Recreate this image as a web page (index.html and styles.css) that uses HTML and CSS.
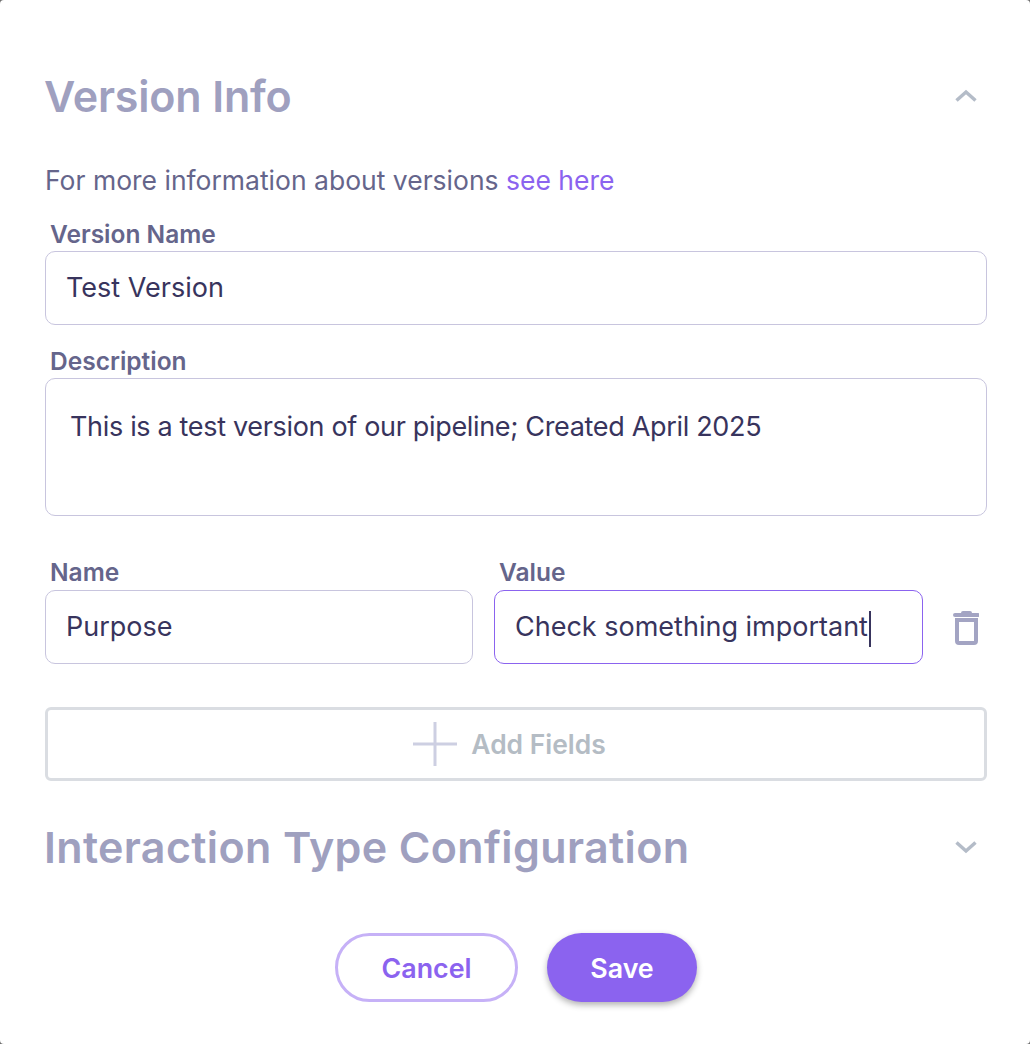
FILE: index.html
```html
<!DOCTYPE html>
<html lang="en">
<head>
    <meta charset="UTF-8">
    <title>Version Info</title>
    <link rel="stylesheet" href="styles.css">
</head>
<body>
    <div class="dialog">
        <div class="section-head">
            <h2 class="title-short">Version Info</h2>
            <svg class="chevron" width="24" height="14" viewBox="0 0 24 14"><path d="M2.500 11.500 12 3l9.500 8.500"/></svg>
        </div>
        <p class="hint">For more information about versions <a href="#">see here</a></p>

        <label class="field-label">Version Name</label>
        <div class="input">Test Version</div>

        <label class="field-label label-desc">Description</label>
        <div class="input textarea">This is a test version of our pipeline; Created April 2025</div>

        <div class="pair-row">
            <div class="pair-col">
                <label class="field-label">Name</label>
                <div class="input">Purpose</div>
            </div>
            <div class="pair-col pair-value">
                <label class="field-label">Value</label>
                <div class="input focused"><span>Check something important</span><i class="caret"></i></div>
            </div>
            <svg class="trash" width="26" height="34" viewBox="0 0 26 34">
                <path class="lid" d="M2 4h23M10 2h7"/>
                <path class="can" d="M4 9h19v21a2 2 0 0 1-2 2H6a2 2 0 0 1-2-2z"/>
            </svg>
        </div>

        <button class="add-fields">
            <svg width="44" height="44" viewBox="0 0 44 44"><path d="M0 22h44M22 0v44"/></svg>
            <span>Add Fields</span>
        </button>

        <div class="section-head second">
            <h2 class="title-long">Interaction Type Configuration</h2>
            <svg class="chevron" width="24" height="14" viewBox="0 0 24 14"><path d="M2.500 2.500 12 11l9.500-8.500"/></svg>
        </div>

        <div class="actions">
            <button class="btn btn-cancel">Cancel</button>
            <button class="btn btn-save">Save</button>
        </div>
    </div>
</body>
</html>
```

FILE: styles.css
```css
* {
    box-sizing: border-box;
}

html, body {
    margin: 0;
    padding: 0;
    height: 100%;
    background: #6e6e6e;
}

body {
    font-family: 'Inter', 'Noto Sans', sans-serif;
    overflow: hidden;
}

.dialog {
    width: 1030px;
    height: 1044px;
    padding: 68px 43px 0 45px;
    background: #fff;
    border-radius: 4px;
}

.section-head {
    display: flex;
    justify-content: space-between;
    align-items: center;
    height: 56px;
    padding-right: 9px;
}

.section-head h2 {
    margin: 0 0 0 -1px;
    font-size: 43px;
    font-weight: 600;
    color: #9fa0bf;
}

.title-short {
    letter-spacing: -0.17px;
}

.title-long {
    letter-spacing: 0.36px;
}

.chevron path {
    fill: none;
    stroke: #b4bcc8;
    stroke-width: 3.500;
}

.hint {
    margin: 40px 0 0;
    height: 32px;
    line-height: 32px;
    font-size: 26.500px;
    color: #65658b;
}

.hint a {
    color: #8b63ef;
    text-decoration: none;
}

.field-label {
    display: block;
    height: 30px;
    line-height: 30px;
    margin: 23px 0 2px 5px;
    font-size: 24.500px;
    font-weight: 600;
    color: #65658b;
}

.label-desc {
    margin-top: 21px;
}

.input {
    height: 74px;
    padding: 0 20px;
    line-height: 72px;
    font-size: 27px;
    color: #38345d;
    background: #fff;
    border: 1px solid #c8c5de;
    border-radius: 10px;
    white-space: nowrap;
}

.textarea {
    height: 138px;
    padding: 28px 24px 0;
    line-height: 40px;
    letter-spacing: -0.33px;
}

.pair-row {
    display: flex;
    align-items: flex-end;
    gap: 21px;
    margin-top: 41px;
}

.pair-col {
    flex: 0 0 428px;
}

.pair-value {
    flex-basis: 429px;
}

.pair-col .field-label {
    margin-top: 0;
    margin-bottom: 3px;
}

.focused {
    border-color: #8b63ef;
}

.caret {
    display: inline-block;
    width: 2px;
    height: 36px;
    margin-left: 1px;
    vertical-align: middle;
    background: #38345d;
}

.trash {
    margin: 0 0 19px 9px;
}

.trash .lid {
    fill: none;
    stroke: #a3a4c3;
    stroke-width: 4;
    stroke-linecap: round;
}

.trash .can {
    fill: none;
    stroke: #a3a4c3;
    stroke-width: 4;
}

.add-fields {
    display: flex;
    justify-content: center;
    align-items: center;
    gap: 14px;
    width: 100%;
    height: 74px;
    margin-top: 43px;
    padding: 0 13px 0 0;
    font-family: inherit;
    font-size: 26.400px;
    font-weight: 600;
    color: #b4bcc4;
    background: #fff;
    border: 3px solid #dadde2;
    border-radius: 6px;
}

.add-fields path {
    stroke: #cdcfe2;
    stroke-width: 3;
    fill: none;
}

.second {
    margin-top: 38px;
}

.actions {
    display: flex;
    justify-content: center;
    gap: 29px;
    margin-top: 58px;
}

.btn {
    height: 69px;
    font-family: inherit;
    font-size: 26.800px;
    font-weight: 600;
    border-radius: 35px;
}

.btn-cancel {
    width: 183px;
    color: #8b63ef;
    background: #fff;
    border: 3px solid #c6b1f7;
}

.btn-save {
    width: 150px;
    color: #fff;
    background: #8b63ef;
    border: none;
    box-shadow: 0 3px 6px rgba(0, 0, 0, 0.3);
}
```
